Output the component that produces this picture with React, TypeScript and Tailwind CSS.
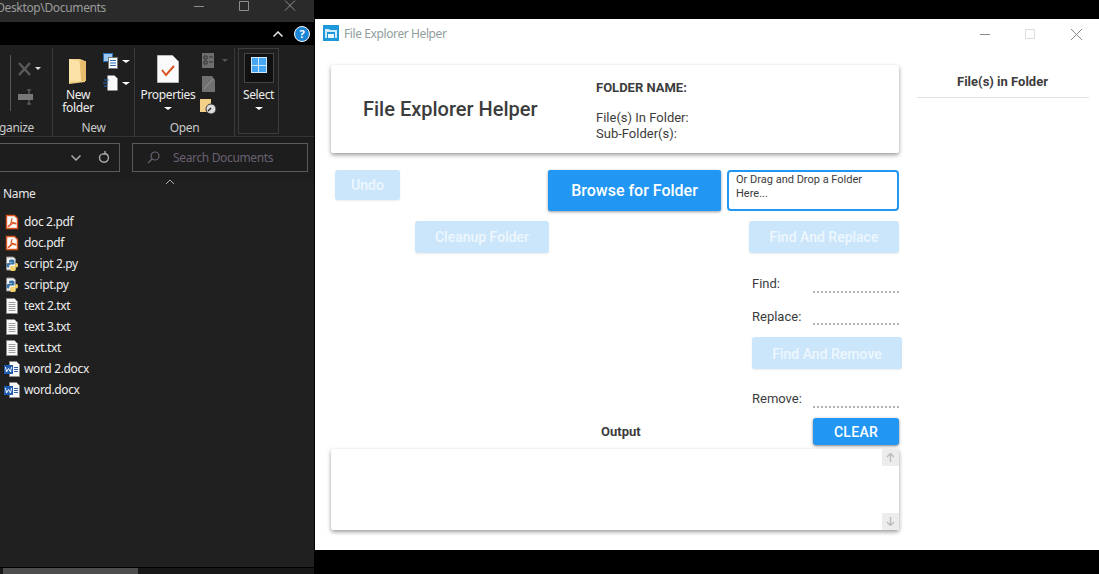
import { ReactNode } from "react";

const FILES = [
  { name: "doc 2.pdf", kind: "pdf" },
  { name: "doc.pdf", kind: "pdf" },
  { name: "script 2.py", kind: "py" },
  { name: "script.py", kind: "py" },
  { name: "text 2.txt", kind: "txt" },
  { name: "text 3.txt", kind: "txt" },
  { name: "text.txt", kind: "txt" },
  { name: "word 2.docx", kind: "doc" },
  { name: "word.docx", kind: "doc" },
];

const FileIcon = ({ kind }: { kind: string }) => {
  if (kind === "pdf")
    return (
      <svg width="16" height="16" viewBox="0 0 16 16" fill="none">
        <path d="M2.500 1.500h8l3 3v10h-11z" fill="#fff" stroke="#d9531e" strokeWidth="1.400" />
        <path d="M8 4.500c-.8 0 0 3.500-1.500 5.500S3.500 12.500 4.500 12.500 7 9.500 9 9.500s3 1 3 0-3-.5-4.500-1.500S8.800 4.500 8 4.500z" stroke="#d9531e" strokeWidth="1.100" />
      </svg>
    );
  if (kind === "py")
    return (
      <svg width="16" height="16" viewBox="0 0 16 16" fill="none">
        <path d="M2.500 1h7l2 2v11h-9z" fill="#f2f2f2" stroke="#8a8a8a" />
        <path d="M8 3.500c-2 0-3 .5-3 1.500v1.500h3v.5H4c-1 0-1.500 1-1.500 2.200S3 11.500 4 11.500h1.200V10c0-1 1-1.500 2-1.500h2c.8 0 1.300-.6 1.300-1.300V5c0-1-1-1.500-2.500-1.500z" fill="#3c76a6" />
        <path d="M8.500 15c2 0 3-.5 3-1.500V12h-3v-.5h4c1 0 1.500-1 1.500-2.200S13.500 7 12.500 7h-1v1.500c0 1-1 1.500-2 1.500h-2c-.8 0-1.300.6-1.300 1.300v2.200c0 1 1 1.500 2.300 1.500z" fill="#f6d264" />
      </svg>
    );
  if (kind === "txt")
    return (
      <svg width="16" height="16" viewBox="0 0 16 16" fill="none">
        <path d="M2.500 .5h8l3 3v12h-11z" fill="#fafafa" stroke="#8c8c8c" />
        <path d="M4.500 4.500h7M4.500 6.500h7M4.500 8.500h7M4.500 10.500h7M4.500 12.500h7" stroke="#a0a0a0" />
      </svg>
    );
  return (
    <svg width="16" height="16" viewBox="0 0 16 16" fill="none">
      <path d="M5.500 .5h7l3 3v12h-10z" fill="#fafafa" stroke="#8c8c8c" />
      <path d="M10 6.500h4M10 8.500h4M10 10.500h4" stroke="#2b5fae" />
      <rect x="0" y="4" width="9" height="9" fill="#1f5bb0" />
      <path d="M1.500 6l1 5 2-3.500 2 3.500 1-5" stroke="#fff" />
    </svg>
  );
};

const Caret = ({ className = "" }: { className?: string }) => (
  <span className={`inline-block w-0 h-0 border-x-[4px] border-x-transparent border-t-[3px] border-t-white ${className}`} />
);

const RibbonGroup = ({
  label,
  width,
  labelClass = "text-center",
  children,
}: {
  label: string;
  width: string;
  labelClass?: string;
  children: ReactNode;
}) => (
  <div className={`${width} h-full shrink-0 flex flex-col border-r border-[#3a3a3a] overflow-hidden`}>
    <div className="flex-1 flex min-h-0">{children}</div>
    <div className={`h-[19px] pt-[3px] text-[12px] leading-[16px] text-[#c9c9c9] whitespace-nowrap ${labelClass}`}>{label}</div>
  </div>
);

const Explorer = () => (
  <div className="w-[315px] shrink-0 h-full flex flex-col bg-[#1f1f1f] border-r border-black font-['Noto_Sans',sans-serif] tracking-[-0.35px] text-white overflow-hidden">
    {/* title bar */}
    <div className="h-[22px] shrink-0 bg-[#2a2a2a] flex items-start text-[12px] text-[#9b9b9b] overflow-hidden">
      <div className="w-[106px] shrink-0 leading-[16px] flex justify-end whitespace-nowrap overflow-hidden">Desktop\Documents</div>
      <svg width="120" height="22" viewBox="0 0 120 22" className="ml-[80px] shrink-0" fill="none" stroke="#8e8e8e">
        <path d="M8 6.500h10M53.500 1.500h9v9h-9zM99 .5l10 10M109 .5l-10 10" />
      </svg>
    </div>
    {/* tab strip */}
    <div className="h-[23px] shrink-0 bg-black flex items-center justify-end pr-[4px]">
      <svg width="10" height="6" viewBox="0 0 10 6" fill="none" stroke="#e8e8e8" strokeWidth="1.500" className="mr-[11px]">
        <path d="M.5 5.500L5 1l4.500 4.500" />
      </svg>
      <div className="w-[16px] h-[16px] rounded-full bg-[#1b86d6] border border-white text-[11px] leading-[14px] font-bold text-center">?</div>
    </div>
    {/* ribbon */}
    <div className="h-[92px] shrink-0 flex py-[3px] pb-0 border-b border-[#333]">
      <RibbonGroup label="Organize" width="w-[53px]" labelClass="flex justify-end pr-[18px]">
        <div className="flex h-[70px]">
          <div className="w-[11px] h-[56px] mt-[7px] border-r border-[#555]" />
          <div className="ml-[6px] mt-[13px] flex flex-col gap-[12px]">
            <svg width="28" height="16" viewBox="0 0 28 16" fill="none">
              <path d="M2 2l11 12M13 2L2 14" stroke="#5a5a5a" strokeWidth="2.500" />
              <path d="M18 6l3 3 3-3z" fill="#ddd" />
            </svg>
            <svg width="20" height="16" viewBox="0 0 20 16" fill="none">
              <rect x="1" y="5" width="15" height="6" fill="#777" />
              <path d="M12 1v14M10 1h4M10 15h4" stroke="#777" />
            </svg>
          </div>
        </div>
      </RibbonGroup>
      <RibbonGroup label="New" width="w-[82px]">
        <div className="w-[50px] flex flex-col items-center pt-[9px]">
          <svg width="20" height="28" viewBox="0 0 20 28" fill="none">
            <path d="M1 2h11l5 2v21l-16 2z" fill="#f3d088" />
            <path d="M1 2l10 2 3 20H2l-1 2z" fill="#fbe3a8" />
            <path d="M12 4h6v20h-5z" fill="#e8bd6e" />
          </svg>
          <div className="text-[12px] leading-[13px] text-center text-[#eee] mt-[3px]">New<br />folder</div>
        </div>
        <div className="flex flex-col gap-[6px] pt-[5px]">
          <div className="flex items-center gap-[2px]">
            <svg width="16" height="16" viewBox="0 0 16 16" fill="none">
              <rect x=".5" y=".5" width="9" height="8" fill="#9cc7ee" stroke="#2b6fb5" />
              <rect x="5.500" y="4.500" width="9" height="11" fill="#fff" stroke="#777" />
              <path d="M7 7.500h6M7 10h6M7 12.500h6" stroke="#2b6fb5" />
            </svg>
            <Caret className="ml-[1px]" />
          </div>
          <div className="flex items-center gap-[2px]">
            <svg width="16" height="16" viewBox="0 0 16 16" fill="none">
              <path d="M4.500 .5h7l3 3v12h-10z" fill="#fafafa" />
              <path d="M1 5h5M0 8h5M1 11h3" stroke="#2b6fb5" strokeWidth="1.200" />
            </svg>
            <Caret className="ml-[1px]" />
          </div>
        </div>
      </RibbonGroup>
      <RibbonGroup label="Open" width="w-[100px]">
        <div className="w-[66px] flex flex-col items-center pt-[7px] shrink-0">
          <svg width="22" height="28" viewBox="0 0 22 28" fill="none">
            <path d="M.5.500h15l6 6v21H.5z" fill="#fafafa" stroke="#bbb" />
            <path d="M5 15l4 5 8-9" stroke="#d9531e" strokeWidth="2" />
          </svg>
          <div className="text-[12px] leading-[13px] text-[#eee] mt-[5px] whitespace-nowrap">Properties</div>
          <Caret className="mt-[6px]" />
        </div>
        <div className="flex flex-col pt-[5px] gap-[7px] ml-[1px]">
          <svg width="26" height="16" viewBox="0 0 26 16" fill="none">
            <rect x="0" y="0" width="12" height="15" fill="#6e6e6e" />
            <path d="M2 3h3v3H2zM2 8h3v3H2zM7 4h4M7 9h4" stroke="#333" />
            <path d="M20 6l3 3 3-3z" fill="#555" />
          </svg>
          <svg width="16" height="16" viewBox="0 0 16 16" fill="none">
            <path d="M0 0h10l3 4v12H0z" fill="#707070" />
            <path d="M2 13L11 3" stroke="#999" />
          </svg>
          <svg width="18" height="16" viewBox="0 0 18 16" fill="none" className="ml-[-2px]">
            <rect x="0" y="0" width="11" height="13" fill="#f3d088" />
            <circle cx="11" cy="10" r="5" fill="#ddd" stroke="#333" />
            <path d="M8 12l3-3" stroke="#222" strokeWidth="1.500" />
          </svg>
        </div>
      </RibbonGroup>
      <div className="w-[41px] h-[86px] ml-[3px] border border-[#3d3d3d] flex flex-col items-center pt-[4px]">
        <div className="w-[30px] h-[30px] bg-[#111] border border-[#444] flex items-start justify-center pt-[3px]">
          <div className="grid grid-cols-2 gap-[1px] w-[16px] h-[16px] bg-[#cfe8fb] p-[1px]">
            <div className="bg-[#47a6f2]" />
            <div className="bg-[#47a6f2]" />
            <div className="bg-[#47a6f2]" />
            <div className="bg-[#47a6f2]" />
          </div>
        </div>
        <div className="text-[12px] leading-[13px] text-[#eee] mt-[5px]">Select</div>
        <Caret className="mt-[6px]" />
      </div>
    </div>
    {/* address row */}
    <div className="h-[42px] shrink-0 flex pt-[6px] bg-[#1d1d1d]">
      <div className="w-[120px] h-[29px] border border-l-0 border-[#5a5a5a] flex items-center justify-end pr-[9px] gap-[17px]">
        <svg width="10" height="6" viewBox="0 0 10 6" fill="none" stroke="#aaa" strokeWidth="1.500">
          <path d="M.5.500L5 5l4.500-4.500" />
        </svg>
        <svg width="12" height="13" viewBox="0 0 12 13" fill="none" stroke="#aaa" strokeWidth="1.400">
          <path d="M7.500 2.500a4.500 4.500 0 1 1-4 .5M7 0v3H4" />
        </svg>
      </div>
      <div className="w-[176px] h-[29px] ml-[12px] border border-[#5a5a5a] flex items-center pl-[14px] text-[12px] text-[#6a6070]">
        <svg width="13" height="13" viewBox="0 0 13 13" fill="none" stroke="#6a6070" strokeWidth="1.200">
          <circle cx="8" cy="5" r="4" />
          <path d="M5 8l-4 4" />
        </svg>
        <span className="ml-[13px]">Search Documents</span>
      </div>
    </div>
    {/* list */}
    <div className="relative flex-1 bg-[#202020]">
      <svg width="10" height="6" viewBox="0 0 10 6" fill="none" stroke="#aaa" className="absolute left-[165px] top-0">
        <path d="M1 5l4-4 4 4" />
      </svg>
      <div className="pl-[3px] pt-[6px] text-[12px] leading-[17px] text-[#e6e6e6]">Name</div>
      <div className="pt-[9px] flex flex-col">
        {FILES.map((f) => (
          <div key={f.name} className="h-[21px] flex items-center pl-[4px] gap-[4px] text-[12px] text-[#ededed]">
            <div className="w-[16px] flex justify-center"><FileIcon kind={f.kind} /></div>
            <span>{f.name}</span>
          </div>
        ))}
      </div>
    </div>
    {/* h scrollbar */}
    <div className="h-[7px] shrink-0 bg-[#171717] border-t border-black">
      <div className="w-[135px] ml-[3px] h-full bg-[#4d4d4d]" />
    </div>
  </div>
);

const DisabledButton = ({ label, className }: { label: string; className: string }) => (
  <button className={`${className} shrink-0 rounded-[3px] bg-[#cbe6fb] text-[#eef7fe] font-medium text-[14px] shadow-[0_1px_2px_rgba(0,0,0,0.08)]`}>
    {label}
  </button>
);

const FieldRow = ({
  label,
  className = "",
  labelClass = "h-[15px]",
}: {
  label: string;
  className?: string;
  labelClass?: string;
}) => (
  <div className={`flex items-end ${className}`}>
    <span className={`w-[61px] ${labelClass} text-[13px] leading-[16px] text-[#3c3c3c]`}>{label}</span>
    <div className="w-[86px] border-b-2 border-dotted border-[#b5b5b5] mb-[-2px]" />
  </div>
);

const Helper = () => (
  <div className="flex-1 flex flex-col min-w-0 font-['Roboto',sans-serif]">
    <div className="h-[19px] shrink-0 bg-black" />
    <div className="flex-1 bg-white min-h-0 flex flex-col">
      {/* title bar */}
      <div className="h-[29px] shrink-0 flex items-center pl-[8px]">
        <svg width="16" height="16" viewBox="0 0 16 16" fill="none" className="mt-[-1px]">
          <rect width="16" height="16" fill="#1e98dc" />
          <path d="M2 4h4l1 1h7v8H2z" fill="#cfeafa" />
          <path d="M4 7h8v6H4z" fill="#1e98dc" />
          <path d="M5 9h6v4H5z" fill="#e8f6fd" />
        </svg>
        <span className="ml-[5px] text-[12px] tracking-[-0.4px] font-['Noto_Sans',sans-serif] text-[#8f9d9d]">File Explorer Helper</span>
        <svg width="102" height="12" viewBox="0 0 102 12" fill="none" className="ml-auto mr-[17px]">
          <path d="M0 6.500h10" stroke="#888" />
          <path d="M45.500 1.500h9v9h-9z" stroke="#ddd" />
          <path d="M91 1l11 11M102 1L91 12" stroke="#888" />
        </svg>
      </div>
      <div className="flex flex-1 min-h-0 pl-[16px] pt-[17px]">
        {/* main column */}
        <div className="w-[568px] shrink-0 flex flex-col">
          <div className="h-[88px] shrink-0 rounded-[2px] bg-white shadow-[0_2px_4px_rgba(0,0,0,0.4)] flex text-[#3c3c3c]">
            <h1 className="ml-[32px] w-[233px] self-center text-[20px] font-medium leading-[24px]">File Explorer Helper</h1>
            <div className="mt-[15px] text-[13px] leading-[16px]">
              <div className="font-bold">FOLDER NAME:</div>
              <div className="mt-[14px]">File(s) In Folder:</div>
              <div>Sub-Folder(s):</div>
            </div>
          </div>
          <div className="flex mt-[17px] items-start">
            <DisabledButton label="Undo" className="ml-[4px] w-[65px] h-[30px]" />
            <button className="ml-[148px] w-[173px] h-[41px] shrink-0 rounded-[2px] bg-[#2196f3] text-white font-medium text-[16px] shadow-[0_1px_3px_rgba(0,0,0,0.4)]">
              Browse for Folder
            </button>
            <div className="ml-[6px] w-[172px] h-[41px] rounded-[4px] border-2 border-[#2196f3] pl-[7px] pr-[20px] pt-[1px] text-[11px] leading-[14px] text-[#3c3c3c]">
              Or Drag and Drop a Folder Here...
            </div>
          </div>
          <div className="flex mt-[10px]">
            <DisabledButton label="Cleanup Folder" className="ml-[84px] w-[134px] h-[32px]" />
            <DisabledButton label="Find And Replace" className="ml-[200px] w-[150px] h-[32px]" />
          </div>
          <div className="ml-[421px] flex flex-col">
            <FieldRow label="Find:" className="mt-[23px]" />
            <FieldRow label="Replace:" className="mt-[18px]" labelClass="h-[14px]" />
            <DisabledButton label="Find And Remove" className="mt-[14px] w-[150px] h-[32px] pt-[2px]" />
            <FieldRow label="Remove:" className="mt-[22px]" />
          </div>
          <div className="flex items-center mt-[12px]">
            <span className="ml-[270px] text-[13px] font-bold text-[#3c3c3c]">Output</span>
            <button className="ml-auto w-[86px] h-[27px] pt-[2px] rounded-[3px] bg-[#2196f3] text-white font-medium text-[14px] tracking-[0.3px] shadow-[0_1px_3px_rgba(0,0,0,0.5)]">
              CLEAR
            </button>
          </div>
          <div className="mt-[4px] h-[81px] shrink-0 rounded-[2px] bg-white shadow-[0_2px_4px_rgba(0,0,0,0.4)] flex justify-end">
            <div className="w-[17px] flex flex-col justify-between">
              <div className="h-[17px] bg-[#ececec] flex items-center justify-center">
                <svg width="9" height="9" viewBox="0 0 9 9" fill="none" stroke="#bbb" strokeWidth="1.400"><path d="M4.500 9V1M1 4l3.500-3.500L8 4" /></svg>
              </div>
              <div className="h-[17px] bg-[#ececec] flex items-center justify-center">
                <svg width="9" height="9" viewBox="0 0 9 9" fill="none" stroke="#bbb" strokeWidth="1.400"><path d="M4.500 0v8M1 5l3.500 3.500L8 5" /></svg>
              </div>
            </div>
          </div>
        </div>
        {/* sidebar */}
        <div className="ml-[18px] w-[172px] shrink-0">
          <div className="h-[33px] pr-[1px] border-b border-[#e0e0e0] text-center text-[13px] font-bold leading-[34px] text-[#3c3c3c]">File(s) in Folder</div>
        </div>
      </div>
    </div>
    <div className="h-[24px] shrink-0 bg-black" />
  </div>
);

const App = () => (
  <div className="w-[1099px] h-[574px] flex bg-black overflow-hidden">
    <Explorer />
    <Helper />
  </div>
);

export default App;
